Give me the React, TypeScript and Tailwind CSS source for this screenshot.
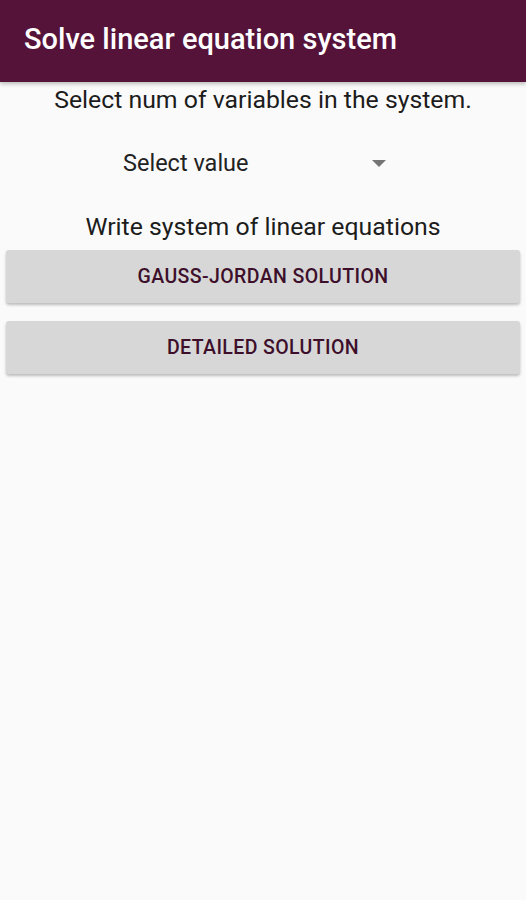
export default function App() {
  return (
    <div className="w-[526px] h-[900px] bg-[#fafafa] flex flex-col" style={{ fontFamily: "Roboto, 'Noto Sans', sans-serif" }}>
      <div className="h-[82px] bg-[#561339] flex items-center pl-[24px] shadow-[0_2px_4px_rgba(0,0,0,0.25)]">
        <span className="text-white text-[29px] font-medium pb-[2px]">Solve linear equation system</span>
      </div>
      <div className="text-center text-[24.8px] text-[#1c1c1c] mt-[3px] leading-[30px]">Select num of variables in the system.</div>
      <div className="flex items-center h-[40px] mt-[29px] pl-[123px] pr-[140px]">
        <span className="text-[23.5px] text-[#222] flex-1">Select value</span>
        <svg width="14" height="8" viewBox="0 0 14 8"><path d="M0 0 L14 0 L7 7 Z" fill="#757575" /></svg>
      </div>
      <div className="text-center text-[24.8px] text-[#1c1c1c] mt-[28px] leading-[30px]">Write system of linear equations</div>
      <div className="px-[6px] flex flex-col gap-[18px] mt-[8px]">
        <button className="h-[53px] bg-[#d7d7d7] rounded-[3px] shadow-[0_2px_3px_rgba(0,0,0,0.25)] text-[#3d0f2a] text-[19.5px] font-medium tracking-[0.4px]">GAUSS-JORDAN SOLUTION</button>
        <button className="h-[53px] bg-[#d7d7d7] rounded-[3px] shadow-[0_2px_3px_rgba(0,0,0,0.25)] text-[#3d0f2a] text-[19.5px] font-medium tracking-[0.4px]">DETAILED SOLUTION</button>
      </div>
    </div>
  );
}
